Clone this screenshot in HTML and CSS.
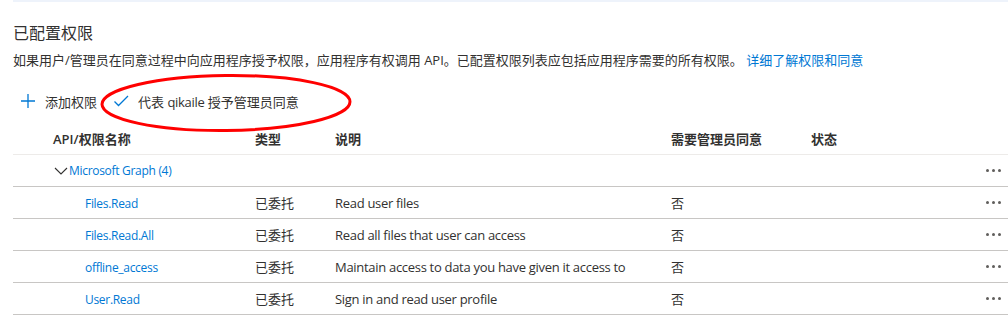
FILE: index.html
```html
<!DOCTYPE html>
<html lang="zh-CN">
<head>
<meta charset="utf-8">
<link rel="stylesheet" href="styles.css">
</head>
<body>
<div class="page">
  <div class="topline"></div>
  <h2 class="title">已配置权限</h2>
  <p class="desc">如果用户/管理员在同意过程中向应用程序授予权限，应用程序有权调用 API。已配置权限列表应包括应用程序需要的所有权限。 <a class="link">详细了解权限和同意</a></p>
  <div class="toolbar">
    <span class="tool">
      <svg class="ico" width="16" height="16" viewBox="0 0 16 16"><path d="M8 1v14M1 8h14" stroke="#0078d4" stroke-width="1.3" fill="none"/></svg>
      <span>添加权限</span>
    </span>
    <span class="tool">
      <svg class="ico" width="16" height="16" viewBox="0 0 16 16"><path d="M1.5 8.5l4 4L15 3" stroke="#0078d4" stroke-width="1.3" fill="none"/></svg>
      <span>代表 <span class="en">qikaile</span> 授予管理员同意</span>
    </span>
    <svg class="ellipse" width="260" height="64" viewBox="0 0 260 64"><ellipse cx="130" cy="32" rx="124" ry="27.5" stroke="#ff0000" stroke-width="3" fill="none" transform="rotate(-0.6 130 32)"/></svg>
  </div>
  <div class="table">
    <div class="row head">
      <div class="c name">API/权限名称</div>
      <div class="c">类型</div>
      <div class="c">说明</div>
      <div class="c">需要管理员同意</div>
      <div class="c">状态</div>
      <div class="c"></div>
    </div>
    <div class="row group">
      <div class="c grp"><svg class="chev" width="14" height="14" viewBox="0 0 14 14"><path d="M1 4l6 6 6-6" stroke="#323130" stroke-width="1.1" fill="none"/></svg><a class="link sm">Microsoft Graph (4)</a></div>
      <div class="c"></div>
      <div class="c"></div>
      <div class="c"></div>
      <div class="c"></div>
      <div class="c more"><span></span><span></span><span></span></div>
    </div>
    <div class="row">
      <div class="c perm"><a class="link sm">Files.Read</a></div>
      <div class="c">已委托</div>
      <div class="c en">Read user files</div>
      <div class="c">否</div>
      <div class="c"></div>
      <div class="c more"><span></span><span></span><span></span></div>
    </div>
    <div class="row">
      <div class="c perm"><a class="link sm">Files.Read.All</a></div>
      <div class="c">已委托</div>
      <div class="c en">Read all files that user can access</div>
      <div class="c">否</div>
      <div class="c"></div>
      <div class="c more"><span></span><span></span><span></span></div>
    </div>
    <div class="row">
      <div class="c perm"><a class="link sm">offline_access</a></div>
      <div class="c">已委托</div>
      <div class="c en">Maintain access to data you have given it access to</div>
      <div class="c">否</div>
      <div class="c"></div>
      <div class="c more"><span></span><span></span><span></span></div>
    </div>
    <div class="row">
      <div class="c perm"><a class="link sm">User.Read</a></div>
      <div class="c">已委托</div>
      <div class="c en">Sign in and read user profile</div>
      <div class="c">否</div>
      <div class="c"></div>
      <div class="c more"><span></span><span></span><span></span></div>
    </div>
  </div>
</div>
</body>
</html>
```

FILE: styles.css
```css
* { box-sizing: border-box; }
html, body { margin: 0; padding: 0; background: #fff; }
body {
  font-family: "Open Sans", "Noto Sans CJK SC", sans-serif;
  font-size: 13px;
  color: #323130;
}
.page { padding-left: 13px; }
.topline { height: 2px; background: #eef3fb; }
.title {
  margin: 20px 0 0;
  font-size: 16px;
  font-weight: 400;
  line-height: 22px;
}
.desc {
  margin: 6px 0 0;
  line-height: 20px;
}
.link { color: #0078d4; text-decoration: none; }
.en { letter-spacing: -0.3px; }
.sm { font-size: 12px; letter-spacing: -0.3px; }
.toolbar {
  position: relative;
  display: flex;
  align-items: center;
  height: 32px;
  margin-top: 15px;
  gap: 16px;
}
.tool { display: flex; align-items: center; gap: 9px; }
.tool:first-child { padding-left: 7px; }
.ico { display: block; }
.ellipse { position: absolute; left: 83px; top: -14px; }
.table { margin-top: 6px; }
.row {
  display: grid;
  grid-template-columns: 242px 80px 336px 140px 1fr 32px;
  height: 32px;
  border-bottom: 1px solid #c8c6c4;
  align-items: center;
}
.row.head { border-bottom-color: #edebe9; font-weight: 600; }
.c { white-space: nowrap; }
.name { padding-left: 40px; }
.grp { padding-left: 41px; display: flex; align-items: center; gap: 1px; }
.chev { display: block; }
.perm { padding-left: 72px; }
.more { display: flex; gap: 3px; justify-content: center; padding-left: 2px; }
.more span { width: 3px; height: 3px; border-radius: 50%; background: #605e5c; }
```
